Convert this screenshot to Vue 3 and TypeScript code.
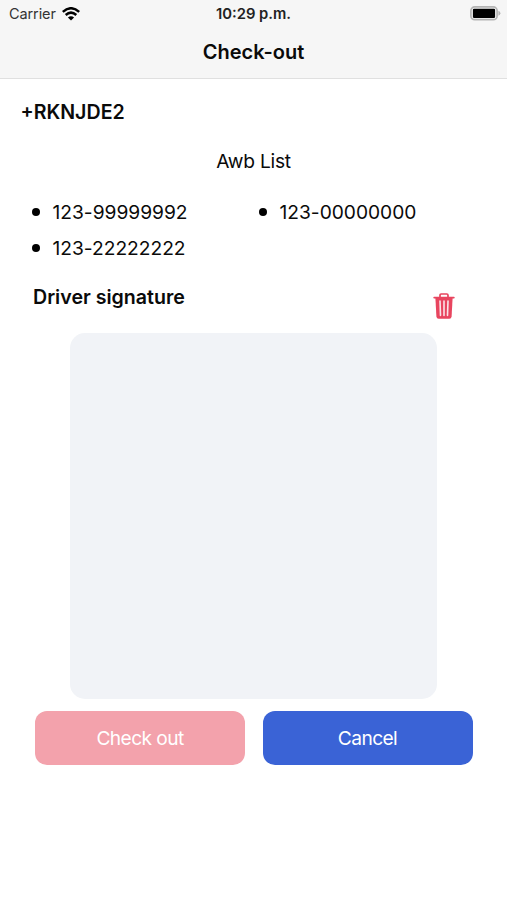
<script setup lang="ts">
import { ref } from 'vue'

const reference = ref<string>('+RKNJDE2')
const awbs = ref<string[]>(['123-99999992', '123-00000000', '123-22222222'])
</script>

<template>
  <main class="screen">
    <header class="header">
      <div class="status">
        <div class="carrier">
          <span class="carrier-name">Carrier</span>
          <svg class="wifi" viewBox="0 0 18 14" width="18" height="14" aria-hidden="true">
            <g fill="none" stroke="#000" stroke-width="2.5">
              <path d="M0.8 4.9Q9 -2.4 17.2 4.9" />
              <path d="M3.7 8Q9 3.3 14.3 8" />
            </g>
            <path d="M5.9 10.4Q9 7.9 12.1 10.4L9 13.6Z" fill="#000" />
          </svg>
        </div>
        <span class="time">10:29 p.m.</span>
        <svg class="battery" viewBox="0 0 31 15" width="31" height="15" aria-hidden="true">
          <rect x="0.9" y="0.9" width="26.2" height="12.8" rx="3.8" fill="#f6f6f6" stroke="#b4b4b4" stroke-width="1.7" />
          <rect x="2.9" y="2.7" width="22.2" height="9.2" rx="1.2" fill="#000" />
          <path d="M28.4 4.8Q30.4 5.7 30.4 7.2T28.4 9.7Z" fill="#b4b4b4" />
        </svg>
      </div>
      <h1 class="title">Check-out</h1>
    </header>

    <h2 class="reference">{{ reference }}</h2>
    <p class="list-title">Awb List</p>
    <ul class="awbs">
      <li v-for="awb in awbs" :key="awb" class="awb">
        <span class="bullet"></span><span>{{ awb }}</span>
      </li>
    </ul>

    <div class="signature-head">
      <h2 class="signature-title">Driver signature</h2>
      <button class="clear" type="button" aria-label="Clear signature">
        <svg viewBox="0 0 22 26" width="22" height="26" aria-hidden="true">
          <path d="M7 4V2.2Q7 1 8.2 1h5.6Q15 1 15 2.2V4" fill="none" stroke="#e8455f" stroke-width="1.7" />
          <path d="M1.2 4.6h19.6" stroke="#e8455f" stroke-width="1.8" stroke-linecap="round" />
          <path d="M2.4 5h17.2l-1 18.5Q18.4 25.8 16.3 25.8H5.7Q3.6 25.8 3.4 23.5Z" fill="#e8455f" />
          <path d="M7 8l.5 14.4M11 8v14.4M15 8l-.5 14.4" stroke="#fbe3e7" stroke-width="1.6" stroke-linecap="round" />
        </svg>
      </button>
    </div>
    <div class="pad"></div>

    <div class="actions">
      <button class="action checkout" type="button"><span>Check out</span></button>
      <button class="action cancel" type="button"><span>Cancel</span></button>
    </div>
  </main>
</template>

<style>
body {
  margin: 0;
  background: #fff;
}
</style>

<style scoped>
.screen {
  box-sizing: border-box;
  width: 507px;
  height: 900px;
  overflow: hidden;
  background: #fff;
  color: #0a0a0a;
  font-family: Inter, 'Liberation Sans', sans-serif;
  font-size: 19.2px;
}
h1,
h2,
p,
ul {
  margin: 0;
  padding: 0;
}
button {
  border: 0;
  padding: 0;
  font: inherit;
}
svg {
  display: block;
}
.header {
  box-sizing: border-box;
  height: 79px;
  background: #f6f6f6;
  border-bottom: 1px solid #e0e0e0;
}
.status {
  display: grid;
  grid-template-columns: 1fr auto 1fr;
  align-items: center;
  height: 27px;
  padding: 0 6px 0 9px;
}
.carrier {
  display: flex;
  align-items: center;
  gap: 6px;
}
.carrier-name {
  font-size: 14.5px;
  line-height: 27px;
  letter-spacing: -0.1px;
  color: #333;
}
.time {
  margin-right: 3px;
  font-size: 14.8px;
  font-weight: 600;
  color: #222;
}
.battery {
  justify-self: end;
}
.title {
  font-size: 20px;
  font-weight: 600;
  line-height: 51px;
  text-align: center;
}
.reference {
  margin: 20px 0 0 20.5px;
  font-size: 19.6px;
  font-weight: 600;
  line-height: 26px;
}
.list-title {
  margin-top: 24px;
  line-height: 25px;
  letter-spacing: -0.25px;
  text-align: center;
}
.awbs {
  display: grid;
  grid-template-columns: 227px 227px;
  grid-auto-rows: 36px;
  margin: 20px 0 0 32px;
  list-style: none;
}
.awb {
  display: flex;
  align-items: center;
  gap: 12.5px;
  letter-spacing: -0.01px;
}
.bullet {
  width: 8px;
  height: 8px;
  border-radius: 50%;
  background: #000;
}
.signature-head {
  display: flex;
  justify-content: space-between;
  height: 49px;
  margin-top: 18px;
  padding: 0 52px 0 33px;
}
.signature-title {
  font-size: 19.6px;
  font-weight: 600;
  line-height: 26px;
}
.clear {
  align-self: flex-start;
  margin-top: 9px;
  background: none;
}
.pad {
  width: 367px;
  height: 366px;
  margin: 0 auto;
  border-radius: 15px;
  background: #f1f3f7;
}
.actions {
  display: grid;
  grid-template-columns: 210px 210px;
  gap: 17.5px;
  margin: 12px 0 0 35px;
}
.action {
  height: 54px;
  border-radius: 12px;
  color: #fff;
  letter-spacing: -0.6px;
}
.checkout {
  background: #f3a2ac;
}
.cancel {
  background: #3a63d6;
}
</style>
